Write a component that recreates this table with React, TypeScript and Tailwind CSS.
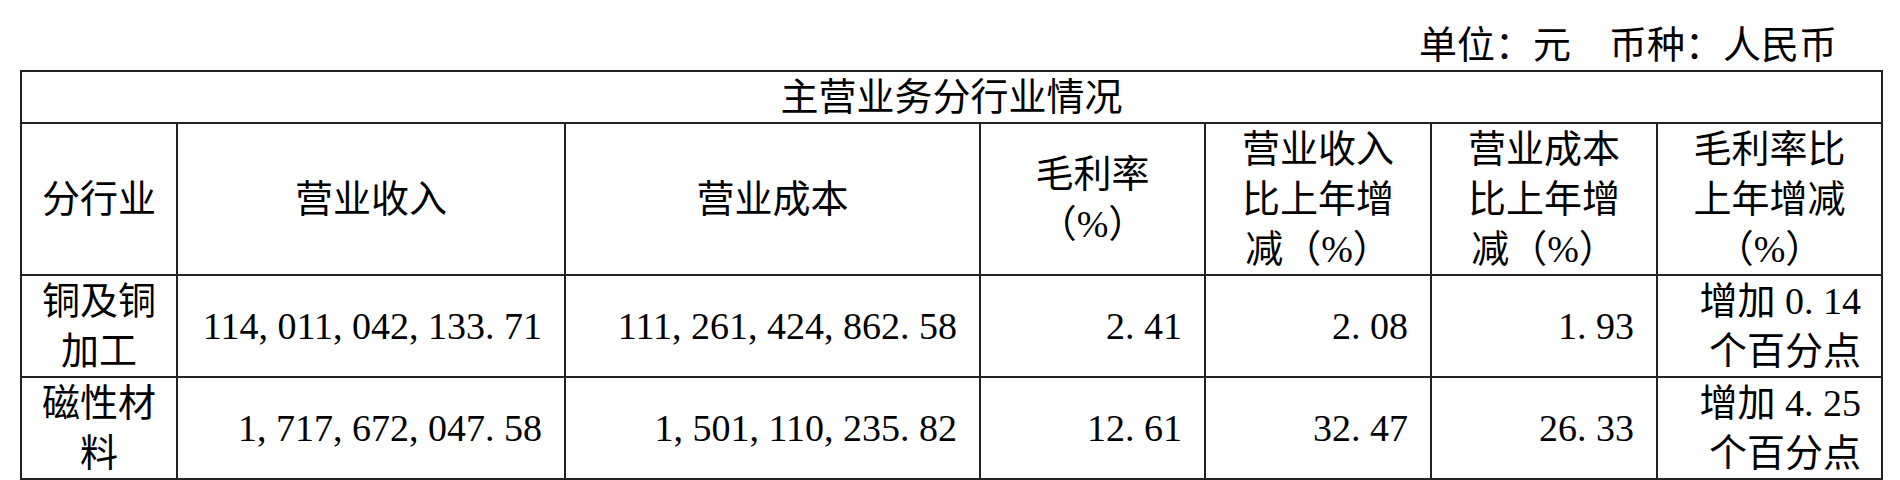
const cell = "border-2 border-[#222] p-0 align-middle";
const head = `${cell} text-center`;
const num = `${cell} text-right pr-[22px]`;

// SimSun-style half-width punctuation: comma and point take a full digit cell
function Num({ v }: { v: string }) {
  return (
    <>
      {v.split("").map((c, i) =>
        c === "," || c === "." ? (
          <span key={i} className="inline-block w-[0.5em] text-left">
            {c}
          </span>
        ) : (
          <span key={i}>{c}</span>
        )
      )}
    </>
  );
}

const rows = [
  {
    name: ["铜及铜", "加工"],
    income: "114,011,042,133.71",
    cost: "111,261,424,862.58",
    margin: "2.41",
    incomeChg: "2.08",
    costChg: "1.93",
    marginChg: "0.14",
    h: "h-[100px]",
  },
  {
    name: ["磁性材", "料"],
    income: "1,717,672,047.58",
    cost: "1,501,110,235.82",
    margin: "12.61",
    incomeChg: "32.47",
    costChg: "26.33",
    marginChg: "4.25",
    h: "h-[101px]",
  },
];

export default function App() {
  return (
    <div className="bg-white text-black font-['Liberation_Serif','Noto_Sans_CJK_SC',serif] text-[38px] leading-[50px] pl-[20px]">
      <div className="w-[1861px] pt-[20px] pr-[44px] text-right">单位：元　币种：人民币</div>
      <table className="table-fixed border-collapse w-[1861px]">
        <colgroup>
          <col className="w-[156px]" />
          <col className="w-[388px]" />
          <col className="w-[415px]" />
          <col className="w-[225px]" />
          <col className="w-[226px]" />
          <col className="w-[226px]" />
          <col className="w-[225px]" />
        </colgroup>
        <tbody>
          <tr className="h-[51px]">
            <td colSpan={7} className={head}>
              主营业务分行业情况
            </td>
          </tr>
          <tr className="h-[152px]">
            <td className={head}>分行业</td>
            <td className={head}>营业收入</td>
            <td className={head}>营业成本</td>
            <td className={head}>
              毛利率
              <br />
              （%）
            </td>
            <td className={head}>
              营业收入
              <br />
              比上年增
              <br />
              减（%）
            </td>
            <td className={head}>
              营业成本
              <br />
              比上年增
              <br />
              减（%）
            </td>
            <td className={head}>
              毛利率比
              <br />
              上年增减
              <br />
              （%）
            </td>
          </tr>
          {rows.map((r) => (
            <tr key={r.income} className={r.h}>
              <td className={head}>
                {r.name[0]}
                <br />
                {r.name[1]}
              </td>
              <td className={num}>
                <Num v={r.income} />
              </td>
              <td className={num}>
                <Num v={r.cost} />
              </td>
              <td className={num}>
                <Num v={r.margin} />
              </td>
              <td className={num}>
                <Num v={r.incomeChg} />
              </td>
              <td className={num}>
                <Num v={r.costChg} />
              </td>
              <td className={`${cell} text-right pr-[20px]`}>
                增加 <Num v={r.marginChg} />
                <br />
                个百分点
              </td>
            </tr>
          ))}
          <tr className="h-[60px]">
            <td colSpan={7} className={cell}></td>
          </tr>
        </tbody>
      </table>
    </div>
  );
}
